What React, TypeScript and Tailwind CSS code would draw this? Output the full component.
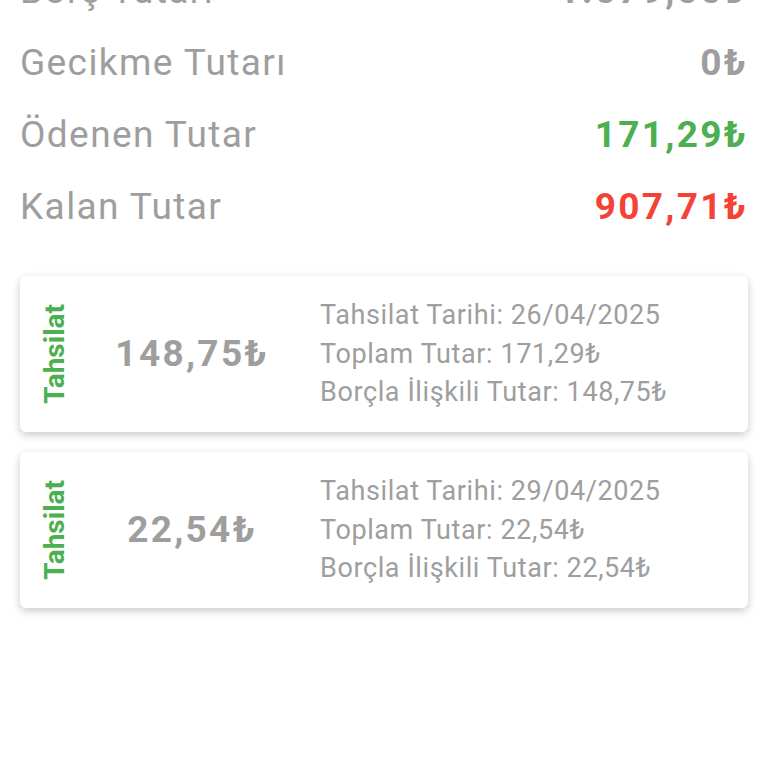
import React from "react";

const font = { fontFamily: "Roboto, 'Noto Sans', sans-serif" };

type Row = { label: string; value: string; color: string };

const rows: Row[] = [
  { label: "Borç Tutarı", value: "1.079,00₺", color: "text-[#9e9e9e]" },
  { label: "Gecikme Tutarı", value: "0₺", color: "text-[#9e9e9e]" },
  { label: "Ödenen Tutar", value: "171,29₺", color: "text-[#4caf50]" },
  { label: "Kalan Tutar", value: "907,71₺", color: "text-[#f44336]" },
];

type Payment = { amount: string; date: string; total: string; related: string };

const payments: Payment[] = [
  { amount: "148,75₺", date: "26/04/2025", total: "171,29₺", related: "148,75₺" },
  { amount: "22,54₺", date: "29/04/2025", total: "22,54₺", related: "22,54₺" },
];

function PaymentCard({ p }: { p: Payment }) {
  return (
    <div className="flex h-[156px] items-center rounded-md bg-white shadow-[0_3px_8px_rgba(0,0,0,0.22)]">
      {/* vertical label */}
      <div className="flex w-[70px] justify-center">
        <span className="rotate-180 text-[28px] font-bold leading-none text-[#4caf50] [writing-mode:vertical-rl]">
          Tahsilat
        </span>
      </div>

      {/* amount */}
      <div className="w-[204px] text-center text-[37px] font-bold tracking-[2.3px] text-[#9e9e9e]">
        {p.amount}
      </div>

      {/* details */}
      <div className="pl-[26px] text-[27px] leading-[38.5px] tracking-[0.6px] text-[#9e9e9e]">
        <div>Tahsilat Tarihi: {p.date}</div>
        <div>Toplam Tutar: {p.total}</div>
        <div>Borçla İlişkili Tutar: {p.related}</div>
      </div>
    </div>
  );
}

export default function App() {
  return (
    <div className="h-[768px] w-[768px] overflow-hidden bg-white" style={font}>
      {/* summary rows */}
      <div className="mt-[-45px] pl-[20px] pr-[20px]">
        {rows.map((r) => (
          <div key={r.label} className="flex h-[72px] items-center justify-between">
            <span className="text-[37px] tracking-[1.4px] text-[#9e9e9e]">{r.label}</span>
            <span className={`text-[37px] font-bold tracking-[2.3px] ${r.color}`}>{r.value}</span>
          </div>
        ))}
      </div>

      {/* payment cards */}
      <div className="mt-[33px] flex flex-col gap-[20px] px-[20px]">
        {payments.map((p) => (
          <PaymentCard key={p.date} p={p} />
        ))}
      </div>
    </div>
  );
}
